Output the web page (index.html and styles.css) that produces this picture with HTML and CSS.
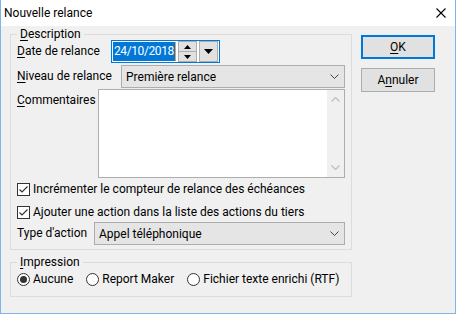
FILE: index.html
```html
<!DOCTYPE html>
<html lang="fr">
<head>
  <meta charset="UTF-8">
  <title>Nouvelle relance</title>
  <link rel="stylesheet" href="styles.css">
</head>
<body>
  <div class="window">
    <div class="titlebar">
      <span class="title">Nouvelle relance</span>
      <svg class="close" width="10" height="10" viewBox="0 0 10 10">
        <path d="M0.5 0.5 L9.5 9.5 M9.5 0.5 L0.5 9.5" stroke="#000" stroke-width="1.1" fill="none"/>
      </svg>
    </div>

    <div class="dialog">
      <div class="main">
        <fieldset class="group description">
          <legend><u>D</u>escription</legend>

          <div class="row date-row">
            <label class="lbl lbl-date"><u>D</u>ate de relance</label>
            <div class="datefield">
              <span class="sel">24/10/2018</span>
              <div class="spin">
                <span class="spin-half">
                  <svg width="7" height="4" viewBox="0 0 7 4"><path d="M3.5 0 L7 4 L0 4 Z" fill="#000"/></svg>
                </span>
                <span class="spin-half spin-down">
                  <svg width="7" height="4" viewBox="0 0 7 4"><path d="M0 0 L7 0 L3.5 4 Z" fill="#000"/></svg>
                </span>
              </div>
              <span class="drop">
                <svg width="9" height="5" viewBox="0 0 9 5"><path d="M0 0 L9 0 L4.5 5 Z" fill="#000"/></svg>
              </span>
            </div>
          </div>

          <div class="row level-row">
            <label class="lbl lbl-level"><u>N</u>iveau de relance</label>
            <div class="combo">
              <span class="combo-text">Première relance</span>
              <svg class="chev" width="9" height="5" viewBox="0 0 9 5"><path d="M0.5 0.5 L4.5 4.5 L8.5 0.5" stroke="#444" fill="none"/></svg>
            </div>
          </div>

          <div class="row comment-row">
            <label class="lbl lbl-comment"><u>C</u>ommentaires</label>
            <div class="memo">
              <div class="memo-text"></div>
              <div class="scrollbar">
                <svg width="9" height="5" viewBox="0 0 9 5"><path d="M0.5 4.5 L4.5 0.5 L8.5 4.5" stroke="#c2c2c2" stroke-width="1.4" fill="none"/></svg>
                <svg width="9" height="5" viewBox="0 0 9 5"><path d="M0.5 0.5 L4.5 4.5 L8.5 0.5" stroke="#c2c2c2" stroke-width="1.4" fill="none"/></svg>
              </div>
            </div>
          </div>

          <div class="check check-first">
            <svg class="box" width="13" height="13" viewBox="0 0 13 13">
              <rect x="0.5" y="0.5" width="12" height="12" fill="#fff" stroke="#333"/>
              <path d="M2.5 6.5 L5 9 L10.5 3.5" stroke="#333" stroke-width="1.2" fill="none"/>
            </svg>
            <span>Incrémenter le compteur de relance des échéances</span>
          </div>

          <div class="check check-second">
            <svg class="box" width="13" height="13" viewBox="0 0 13 13">
              <rect x="0.5" y="0.5" width="12" height="12" fill="#fff" stroke="#333"/>
              <path d="M2.5 6.5 L5 9 L10.5 3.5" stroke="#333" stroke-width="1.2" fill="none"/>
            </svg>
            <span>Ajouter une action dans la liste des actions du tiers</span>
          </div>

          <div class="row type-row">
            <label class="lbl lbl-type">Type d'action</label>
            <div class="combo">
              <span class="combo-text">Appel téléphonique</span>
              <svg class="chev" width="9" height="5" viewBox="0 0 9 5"><path d="M0.5 0.5 L4.5 4.5 L8.5 0.5" stroke="#444" fill="none"/></svg>
            </div>
          </div>
        </fieldset>

        <fieldset class="group impression">
          <legend><u>I</u>mpression</legend>
          <div class="radios">
            <div class="radio">
              <svg width="13" height="13" viewBox="0 0 13 13">
                <circle cx="6.5" cy="6.5" r="6" fill="#fff" stroke="#333"/>
                <circle cx="6.5" cy="6.5" r="3.5" fill="#333"/>
              </svg>
              <span>Aucune</span>
            </div>
            <div class="radio">
              <svg width="13" height="13" viewBox="0 0 13 13">
                <circle cx="6.5" cy="6.5" r="6" fill="#fff" stroke="#333"/>
              </svg>
              <span>Report Maker</span>
            </div>
            <div class="radio">
              <svg width="13" height="13" viewBox="0 0 13 13">
                <circle cx="6.5" cy="6.5" r="6" fill="#fff" stroke="#333"/>
              </svg>
              <span>Fichier texte enrichi (RTF)</span>
            </div>
          </div>
        </fieldset>
      </div>

      <div class="buttons">
        <button class="btn btn-default"><u>O</u>K</button>
        <button class="btn">A<u>n</u>nuler</button>
      </div>
    </div>
  </div>
</body>
</html>
```

FILE: styles.css
```css
* { box-sizing: border-box; }
html, body { margin: 0; }
body {
  background: #fff;
  font-family: Roboto, "Noto Sans", sans-serif;
  font-size: 12px;
  color: #000;
}
u { text-decoration-thickness: 1px; text-underline-offset: 2px; }

.window {
  width: 456px;
  height: 314px;
  border: 1px solid #7eb4ea;
  border-top: none;
  background: #f0f0f0;
  display: flex;
  flex-direction: column;
}
.titlebar {
  height: 26px;
  flex: none;
  background: #fff;
  display: flex;
  align-items: center;
  justify-content: space-between;
  padding: 0 9px 0 3px;
}
.title { line-height: 15px; }

.dialog {
  display: flex;
  align-items: flex-start;
  padding: 2px 0 0 9px;
}
.main { width: 342px; display: flex; flex-direction: column; }

.group {
  margin: 0;
  min-width: 0;
  border: 1px solid #dcdcdc;
  padding: 0 6px 4px;
}
.group legend {
  padding: 0 3px;
  line-height: 13px;
}

.row { display: flex; align-items: center; height: 23px; }
.date-row { margin-top: -1px; }
.level-row { margin-top: 2px; }
.comment-row { margin-top: 1px; height: 89px; align-items: flex-start; }
.type-row { margin-top: 2px; }

.lbl { flex: none; line-height: 15px; }
.lbl-date { width: 94px; }
.lbl-level { width: 104px; }
.lbl-comment { width: 81px; margin-top: 4px; }
.lbl-type { width: 77px; }

.datefield {
  width: 109px;
  height: 23px;
  border: 1px solid #0078d7;
  background: #fff;
  display: flex;
  align-items: center;
  padding: 0 0 0 1px;
}
.sel {
  background: #0078d7;
  color: #fff;
  height: 19px;
  line-height: 19px;
  padding: 0 1px;
  letter-spacing: -0.4px;
  border-right: 1px solid #f39a3d;
}
.spin {
  margin-left: auto;
  width: 19px;
  height: 21px;
  display: flex;
  flex-direction: column;
  border: 1px solid #adadad;
  background: #e1e1e1;
}
.spin-half {
  flex: 1;
  display: flex;
  align-items: center;
  justify-content: center;
}
.spin-down { border-top: 1px solid #adadad; }
.drop {
  width: 19px;
  height: 21px;
  margin: 0 1px 0 2px;
  border: 1px solid #adadad;
  background: #e1e1e1;
  display: flex;
  align-items: center;
  justify-content: center;
}

.combo {
  flex: 1;
  height: 23px;
  background: #e5e5e5;
  border: 1px solid #adadad;
  display: flex;
  align-items: center;
  justify-content: space-between;
  padding: 0 5px 0 4px;
}

.memo {
  flex: 1;
  height: 89px;
  background: #fff;
  border: 1px solid #adadad;
  display: flex;
}
.memo-text { flex: 1; }
.scrollbar {
  width: 17px;
  background: #f0f0f0;
  display: flex;
  flex-direction: column;
  justify-content: space-between;
  align-items: center;
  padding: 7px 0 7px;
}

.check { display: flex; align-items: center; height: 15px; line-height: 15px; }
.check .box { margin-right: 3px; flex: none; }
.check-first { margin-top: 4px; }
.check-second { margin-top: 8px; }

.impression { margin-top: 6px; padding-bottom: 9px; }
.radios { display: flex; gap: 13px; padding-top: 3px; }
.radio { display: flex; align-items: center; height: 15px; line-height: 15px; }
.radio svg { margin-right: 3px; flex: none; }

.buttons {
  margin: 7px 0 0 9px;
  display: flex;
  flex-direction: column;
  gap: 9px;
}
.btn {
  width: 74px;
  height: 24px;
  padding: 0;
  font: inherit;
  color: #000;
  background: #e1e1e1;
  border: 1px solid #adadad;
}
.btn-default { border: 2px solid #0078d7; }
```
